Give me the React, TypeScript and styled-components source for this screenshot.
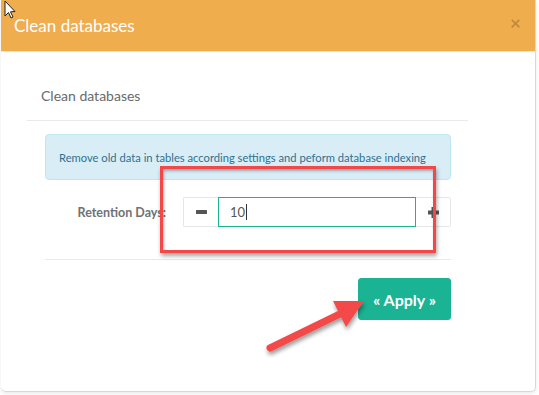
import styled, {createGlobalStyle} from 'styled-components'

const GlobalStyle = createGlobalStyle`
    html, body {
        margin: 0;
        padding: 0;
        background: #ffffff;
    }

    body {
        font-family: Lato, "Open Sans", "Liberation Sans", sans-serif;
        color: #676a6c;
    }
`

const Page = styled.div`
    position: relative;
    width: 539px;
    height: 395px;
    overflow: hidden;
    background: #fff;
`

const Modal = styled.div`
    position: relative;
    margin-left: 1px;
    width: 535px;
    height: 392px;
    background: #fff;
    border-right: 1px solid #d8d8d8;
    border-bottom: 1px solid #d8d8d8;
    border-radius: 0 0 5px 5px;
    box-sizing: border-box;
    box-shadow: 0 2px 4px rgba(0, 0, 0, 0.08);
`

const Header = styled.div`
    display: flex;
    align-items: center;
    justify-content: space-between;
    height: 52px;
    box-sizing: border-box;
    padding: 0 14px 1px 13px;
    background: #f0ad4e;
    border-bottom: 1px solid #e5e5e5;
`

const Title = styled.h4`
    margin: 0;
    font-size: 17px;
    font-weight: 400;
    color: #fff;
`

const Close = styled.span`
    font-size: 19px;
    line-height: 1;
    font-weight: 700;
    color: #000;
    opacity: 0.2;
    margin-top: -6px;
`

const Body = styled.div`
    padding: 27px 67px 0 26px;
`

const IboxTitle = styled.div`
    padding: 8px 14px 16px;
    border-bottom: 1px solid #e7eaec;
    font-size: 14px;
    color: #676a6c;
`

const IboxContent = styled.div`
    padding: 13px 17px 0 18px;
`

const Alert = styled.div`
    padding: 15px 13px 14px;
    background: #d9edf7;
    border: 1px solid #bce8f1;
    border-radius: 4px;
    color: #31708f;
    font-size: 11.2px;
    line-height: 15px;
    white-space: nowrap;
`

const FormRow = styled.div`
    display: grid;
    grid-template-columns: 121px 1fr;
    column-gap: 17px;
    align-items: center;
    margin-top: 17px;
    padding-bottom: 32px;
    border-bottom: 1px solid #e7eaec;
`

const Label = styled.label`
    text-align: right;
    font-size: 12.5px;
    font-weight: 700;
    color: #6f7173;
`

const InputGroup = styled.div`
    display: flex;
    height: 30px;
`

const StepButton = styled.button<{ $side: 'left' | 'right' }>`
    display: flex;
    align-items: center;
    justify-content: center;
    width: 35px;
    padding: 0;
    background: #fff;
    border: 1px solid #e5e6e7;
    border-radius: ${p => p.$side === 'left' ? '2px 0 0 2px' : '0 2px 2px 0'};
    ${p => p.$side === 'left' ? 'border-right: none;' : 'border-left: none;'}
    color: #555;
`

const NumberInput = styled.div`
    flex: 1;
    display: flex;
    align-items: center;
    padding-left: 11px;
    border: 1px solid #1ab394;
    font-size: 13px;
    color: #555;
`

const Caret = styled.span`
    display: inline-block;
    width: 1px;
    height: 16px;
    margin-left: 1px;
    background: #333;
`

const Footer = styled.div`
    display: flex;
    justify-content: flex-end;
    padding-top: 18px;
`

const ApplyButton = styled.button`
    width: 93px;
    height: 42px;
    background: #1ab394;
    border: 1px solid #1ab394;
    border-radius: 3px;
    color: #fff;
    font-family: Lato, "Open Sans", sans-serif;
    font-size: 16px;
    font-weight: 700;
`

const Highlight = styled.div`
    position: absolute;
    left: 160px;
    top: 166px;
    width: 276px;
    height: 87px;
    box-sizing: border-box;
    border: 3px solid #f44848;
    box-shadow: 1px 3px 4px rgba(0, 0, 0, 0.35), inset 1px 2px 3px rgba(0, 0, 0, 0.3);
`

const Overlay = styled.svg`
    position: absolute;
    left: 0;
    top: 0;
    pointer-events: none;
`

const App = () => {
    return (
        <Page>
            <GlobalStyle/>
            <Modal>
                <Header>
                    <Title>Clean databases</Title>
                    <Close>×</Close>
                </Header>
                <Body>
                    <IboxTitle>Clean databases</IboxTitle>
                    <IboxContent>
                        <Alert>Remove old data in tables according settings and peform database indexing</Alert>
                        <FormRow>
                            <Label>Retention Days:</Label>
                            <InputGroup>
                                <StepButton $side="left">
                                    <svg width="11" height="4"><rect width="11" height="4" rx="0.5" fill="#555"/></svg>
                                </StepButton>
                                <NumberInput>10<Caret/></NumberInput>
                                <StepButton $side="right">
                                    <svg width="11" height="11">
                                        <rect x="0" y="3.5" width="11" height="4" fill="#555"/>
                                        <rect x="3.5" y="0" width="4" height="11" fill="#555"/>
                                    </svg>
                                </StepButton>
                            </InputGroup>
                        </FormRow>
                        <Footer>
                            <ApplyButton>« Apply »</ApplyButton>
                        </Footer>
                    </IboxContent>
                </Body>
            </Modal>

            <Highlight/>

            <Overlay width="539" height="395">
                <defs>
                    <filter id="shadow" x="-20%" y="-20%" width="140%" height="140%">
                        <feDropShadow dx="1" dy="3" stdDeviation="2" floodColor="#000" floodOpacity="0.4"/>
                    </filter>
                </defs>
                <g filter="url(#shadow)">
                    <line x1="270" y1="348" x2="342" y2="313" stroke="#f44848" strokeWidth="7" strokeLinecap="round"/>
                    <polygon points="333,301 364,301 346,327" fill="#f44848"/>
                </g>
                {/* mouse pointer */}
                <path d="M5 1 L5 16 L8.5 12.5 L11 18 L13 17 L10.5 11.8 L15 11.5 Z" fill="#fff" stroke="#222" strokeWidth="1"/>
            </Overlay>
        </Page>
    )
}

export default App
